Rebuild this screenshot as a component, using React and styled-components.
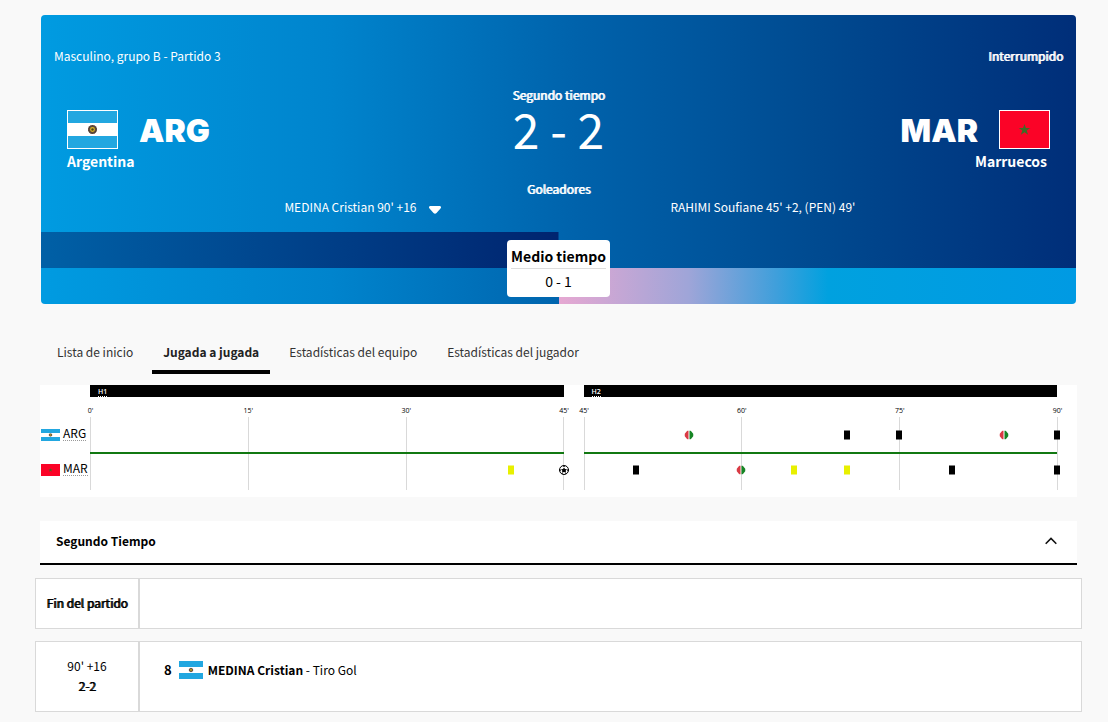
import React, { useState } from "react";
import styled, { createGlobalStyle, css } from "styled-components";

const sans = `"Noto Sans CJK JP", "Noto Sans CJK SC", "Noto Sans", sans-serif`;

const GlobalStyle = createGlobalStyle`
  *, *::before, *::after { box-sizing: border-box; }
  body {
    margin: 0;
    background: #f9f9f9;
    color: #000;
    font-family: ${sans};
    font-size: 12px;
    line-height: 20px;
  }
  button { font: inherit; color: inherit; background: none; border: 0; padding: 0; cursor: pointer; }
  h1, h2, p, ol { margin: 0; padding: 0; list-style: none; font-size: inherit; }
`;

const Page = styled.main`
  padding: 15px 31px 10px 40px;
`;

const Scoreboard = styled.section`
  display: flex;
  flex-direction: column;
  min-height: 289px;
  margin: 0 1px;
  padding: 31px 0 7px;
  border-radius: 4px;
  color: #fff;
  background:
    linear-gradient(90deg, #0060a6, #00246f) left bottom 36px / 50% 36px no-repeat,
    linear-gradient(90deg, #e6a8d2, #9fa5d8 25%, #3f9fdb 42%, #00a1df 52%, #009ae3) right bottom / 50% 36px no-repeat,
    linear-gradient(90deg, #009be1, #0084cd 28%, #0062ab 52%, #004a90 75%, #002e79);
`;

const MetaRow = styled.div`
  display: flex;
  justify-content: space-between;
  padding: 0 13px;
`;

const Strong = styled.span`
  text-shadow: 1px 0 currentColor;
`;

const Teams = styled.div`
  display: grid;
  grid-template-columns: 1fr auto 1fr;
  padding: 19px 26px 0;
`;

const Team = styled.div`
  display: flex;
  flex-direction: column;
  padding-top: 25px;
  align-items: ${(p) => (p.$away ? "flex-end" : "flex-start")};
`;

const TeamHead = styled.div`
  display: flex;
  align-items: center;
  gap: 21px;
  flex-direction: ${(p) => (p.$away ? "row-reverse" : "row")};
`;

const TeamCode = styled.span`
  font-family: Inter, "Liberation Sans", sans-serif;
  font-weight: 900;
  font-size: 32px;
  line-height: 37px;
  padding-top: 2px;
`;

const TeamName = styled.span`
  font-size: 14px;
  font-weight: 700;
  line-height: 24px;
  padding-right: ${(p) => (p.$away ? "3px" : 0)};
`;

const Middle = styled.div`
  display: flex;
  flex-direction: column;
  align-items: center;
`;

const Score = styled.span`
  font-size: 48px;
  line-height: 46px;
`;

const GoalsTitle = styled.div`
  padding-top: 29px;
  line-height: 18px;
`;

const Scorers = styled.div`
  display: grid;
  grid-template-columns: 1fr 230px 1fr;
  padding-right: 6px;
`;

const ScorerSide = styled.div`
  display: flex;
  align-items: center;
  gap: 12px;
  line-height: 18px;
  justify-content: ${(p) => (p.$away ? "flex-start" : "flex-end")};
  grid-column: ${(p) => (p.$away ? 3 : 1)};
`;

const ExpandButton = styled.button`
  display: flex;
  padding-top: 6px;
`;

const HalfTime = styled.div`
  align-self: center;
  margin-top: auto;
  padding: 5px 4px 3px;
  border-radius: 4px;
  background: #fff;
  color: #000;
  text-align: center;
`;

const HalfTimeTitle = styled.div`
  border-bottom: 1px solid #ddd;
  font-size: 14px;
  font-weight: 700;
  line-height: 23px;
`;

const HalfTimeScore = styled.div`
  font-size: 14px;
  line-height: 25px;
`;

const Tabs = styled.nav`
  display: flex;
  gap: 8px;
  margin-top: 31px;
  padding-left: 6px;
`;

const Tab = styled.button`
  padding: 7px 11px 8px;
  border-bottom: 4px solid transparent;
  color: #333;
  ${(p) => p.$active && css`
    font-weight: 700;
    color: #222;
    border-bottom-color: #000;
  `}
`;

const Timeline = styled.section`
  display: flex;
  margin-top: 11px;
  padding-right: 20px;
  height: 112px;
  background: #fff;
`;

const Legend = styled.div`
  flex: 0 0 50px;
  padding: 40px 0 0 1px;
`;

const LegendRow = styled.div`
  display: flex;
  align-items: center;
  gap: 3px;
  height: 20px;
  margin-bottom: 15px;
`;

const Abbr = styled.abbr`
  font-size: 12px;
  line-height: 14px;
  margin-bottom: 3px;
  text-decoration: none;
  border-bottom: 1px dotted #999;
`;

const Halves = styled.div`
  display: flex;
  flex: 1;
  gap: 20px;
`;

const Half = styled.div`
  flex: 1;
  position: relative;
`;

const HalfBar = styled.div`
  height: 12px;
  padding-left: 8px;
  background: #000;
  color: #fff;
  font: 600 7px/9px "Open Sans", sans-serif;
`;

const HalfAbbr = styled.abbr`
  display: inline-block;
  margin-top: 2px;
  text-decoration: none;
  border-bottom: 1px dotted #fff;
`;

const Ticks = styled.div`
  display: flex;
  justify-content: space-between;
  margin-right: -1px;
  padding-top: 8px;
`;

const Tick = styled.div`
  display: flex;
  flex-direction: column;
  align-items: center;
  width: 1px;
  font: 7px/12px "Open Sans", sans-serif;
  white-space: nowrap;
  &::after {
    content: "";
    width: 1px;
    height: 73px;
    background: #d9d9d9;
  }
`;

const Tracks = styled.div`
  position: absolute;
  inset: 32px 0 auto;
`;

const Track = styled.div`
  position: relative;
  height: ${(p) => (p.$divided ? "37px" : "31px")};
  border-bottom: ${(p) => (p.$divided ? "2px solid #117811" : 0)};
`;

const Marker = styled.span`
  position: absolute;
  top: 50%;
  display: flex;
  transform: translate(-50%, -50%);
`;

const Card = styled.i`
  width: 6px;
  height: 9px;
  background: ${(p) => p.$color};
`;

const Accordion = styled.button`
  display: flex;
  align-items: center;
  justify-content: space-between;
  width: 100%;
  height: 44px;
  margin-top: 24px;
  padding: 0 20px 2px 16px;
  border-bottom: 2px solid #000;
  background: #fff;
  font-weight: 700;
`;

const Plays = styled.ol`
  display: flex;
  flex-direction: column;
  gap: 12px;
  && { margin: 13px -5px 0; }
`;

const Play = styled.li`
  display: flex;
  border: 1px solid #d9d9d9;
  background: #fff;
`;

const PlayTime = styled.div`
  flex: 0 0 104px;
  padding: 14px 0 15px;
  border-right: 2px solid #d9d9d9;
  text-align: center;
`;

const PlayBody = styled.div`
  display: flex;
  align-items: center;
  gap: 5px;
  padding: 2px 24px 16px;
`;

const Shirt = styled.b`
  font-size: 13px;
  padding-right: 2px;
`;

function Flag({ code, width, height, outlined }) {
  return (
    <svg width={width} height={height} viewBox="0 0 51 39" preserveAspectRatio="none" role="img" aria-label={code}>
      {code === "ARG" ? (
        <>
          <rect width="51" height="39" fill="#22a7e0" />
          <rect y="13" width="51" height="13" fill="#fff" />
          <circle cx="25.500" cy="19.500" r="4.500" fill="#6b5244" />
          <circle cx="25.500" cy="19.500" r="3.600" fill="none" stroke="#4a3c34" strokeWidth="1.400" strokeDasharray="1 .6" />
          <circle cx="25.500" cy="19.500" r="2.400" fill="#d8b520" />
          <circle cx="25.500" cy="19.500" r="1.200" fill="#4b4020" />
        </>
      ) : (
        <>
          <rect width="51" height="39" fill="#fb0327" />
          <path d="M25.500 14l1.400 4.100h4.300l-3.500 2.500 1.400 4.200-3.600-2.600-3.600 2.600 1.400-4.200-3.500-2.500h4.300z" fill="#3f6b26" />
        </>
      )}
      {outlined && <rect x=".5" y=".5" width="50" height="38" fill="none" stroke="#fff" />}
    </svg>
  );
}

function Substitution() {
  return (
    <svg width="9" height="9" viewBox="0 0 9 9" role="img" aria-label="Cambio">
      <path d="M3 0h1v9H3L0 5.500v-2z" fill="#d93a44" />
      <path d="M6 0H5v9h1l3-3.500v-2z" fill="#168524" />
    </svg>
  );
}

function Ball() {
  return (
    <svg width="10" height="10" viewBox="0 0 20 20" role="img" aria-label="Gol">
      <circle cx="10" cy="10" r="9" fill="#fff" stroke="#000" strokeWidth="2" />
      <path d="M10 5l2 3.200 4 .3-2.700 3 1 4L10 14l-4.300 1.500 1-4L4 8.500l4-.3z" />
      <path d="M6.500 1.500h7L10 4zM.8 8L4 9.500 2.500 13 1 12zM19.200 8L16 9.500l1.500 3.500 1.500-1zM4.500 16.500L7 16l1.500 3zM15.500 16.500L13 16l-1.500 3z" />
    </svg>
  );
}

const halves = [
  {
    label: "H1", start: 0, ticks: [0, 15, 30, 45],
    home: [],
    away: [[40, "yellow"], [45, "goal"]],
  },
  {
    label: "H2", start: 45, ticks: [45, 60, 75, 90],
    home: [[55, "sub"], [70, "black"], [75, "black"], [85, "sub"], [90, "black"]],
    away: [[50, "black"], [60, "sub"], [65, "yellow"], [70, "yellow"], [80, "black"], [90, "black"]],
  },
];

const cardColors = { yellow: "#e8f000", black: "#000" };

function Events({ items, start, divided }) {
  return (
    <Track $divided={divided}>
      {items.map(([minute, kind]) => (
        <Marker key={minute} style={{ left: `${((minute - start) / 45) * 100}%` }}>
          {kind === "sub" ? <Substitution /> : kind === "goal" ? <Ball /> : <Card $color={cardColors[kind]} />}
        </Marker>
      ))}
    </Track>
  );
}

const tabs = ["Lista de inicio", "Jugada a jugada", "Estadísticas del equipo", "Estadísticas del jugador"];

export default function App() {
  const [tab, setTab] = useState(1);
  const [open, setOpen] = useState(true);
  return (
    <>
      <GlobalStyle />
      <Page>
        <Scoreboard>
          <MetaRow>
            <span>Masculino, grupo B - Partido 3</span>
            <Strong>Interrumpido</Strong>
          </MetaRow>
          <Teams>
            <Team>
              <TeamHead>
                <Flag code="ARG" width={51} height={39} outlined />
                <TeamCode>ARG</TeamCode>
              </TeamHead>
              <TeamName>Argentina</TeamName>
            </Team>
            <Middle>
              <Strong>Segundo tiempo</Strong>
              <Score>2 - 2</Score>
              <GoalsTitle><Strong>Goleadores</Strong></GoalsTitle>
            </Middle>
            <Team $away>
              <TeamHead $away>
                <Flag code="MAR" width={51} height={39} outlined />
                <TeamCode>MAR</TeamCode>
              </TeamHead>
              <TeamName $away>Marruecos</TeamName>
            </Team>
          </Teams>
          <Scorers>
            <ScorerSide>
              MEDINA Cristian 90' +16
              <ExpandButton aria-label="Ver más">
                <svg width="12" height="8" viewBox="0 0 12 8"><path d="M1 0h10q2 1 .5 2.500L7.500 7q-1.500 1.500-3 0L.5 2.500Q-1 1 1 0z" fill="#fff" /></svg>
              </ExpandButton>
            </ScorerSide>
            <ScorerSide $away>RAHIMI Soufiane 45' +2, (PEN) 49'</ScorerSide>
          </Scorers>
          <HalfTime>
            <HalfTimeTitle>Medio tiempo</HalfTimeTitle>
            <HalfTimeScore>0 - 1</HalfTimeScore>
          </HalfTime>
        </Scoreboard>

        <Tabs>
          {tabs.map((name, i) => (
            <Tab key={name} $active={i === tab} onClick={() => setTab(i)}>{name}</Tab>
          ))}
        </Tabs>

        <Timeline>
          <Legend>
            {["ARG", "MAR"].map((code) => (
              <LegendRow key={code}>
                <Flag code={code} width={19} height={12} />
                <Abbr>{code}</Abbr>
              </LegendRow>
            ))}
          </Legend>
          <Halves>
            {halves.map((half) => (
              <Half key={half.label}>
                <HalfBar><HalfAbbr>{half.label}</HalfAbbr></HalfBar>
                <Ticks>
                  {half.ticks.map((t) => <Tick key={t}>{t}'</Tick>)}
                </Ticks>
                <Tracks>
                  <Events items={half.home} start={half.start} divided />
                  <Events items={half.away} start={half.start} />
                </Tracks>
              </Half>
            ))}
          </Halves>
        </Timeline>

        <Accordion aria-expanded={open} onClick={() => setOpen(!open)}>
          Segundo Tiempo
          <svg width="12" height="8" viewBox="0 0 12 8" fill="none" stroke="#111" strokeWidth="1.600"><path d="M.7 6.800L6 1.500l5.300 5.300" /></svg>
        </Accordion>
        {open && (
          <Plays>
            <Play>
              <PlayTime><Strong>Fin del partido</Strong></PlayTime>
            </Play>
            <Play>
              <PlayTime>
                <p>90' +16</p>
                <Strong>2-2</Strong>
              </PlayTime>
              <PlayBody>
                <Shirt>8</Shirt>
                <Flag code="ARG" width={24} height={18} />
                <span><b>MEDINA Cristian</b> - Tiro Gol</span>
              </PlayBody>
            </Play>
          </Plays>
        )}
      </Page>
    </>
  );
}
